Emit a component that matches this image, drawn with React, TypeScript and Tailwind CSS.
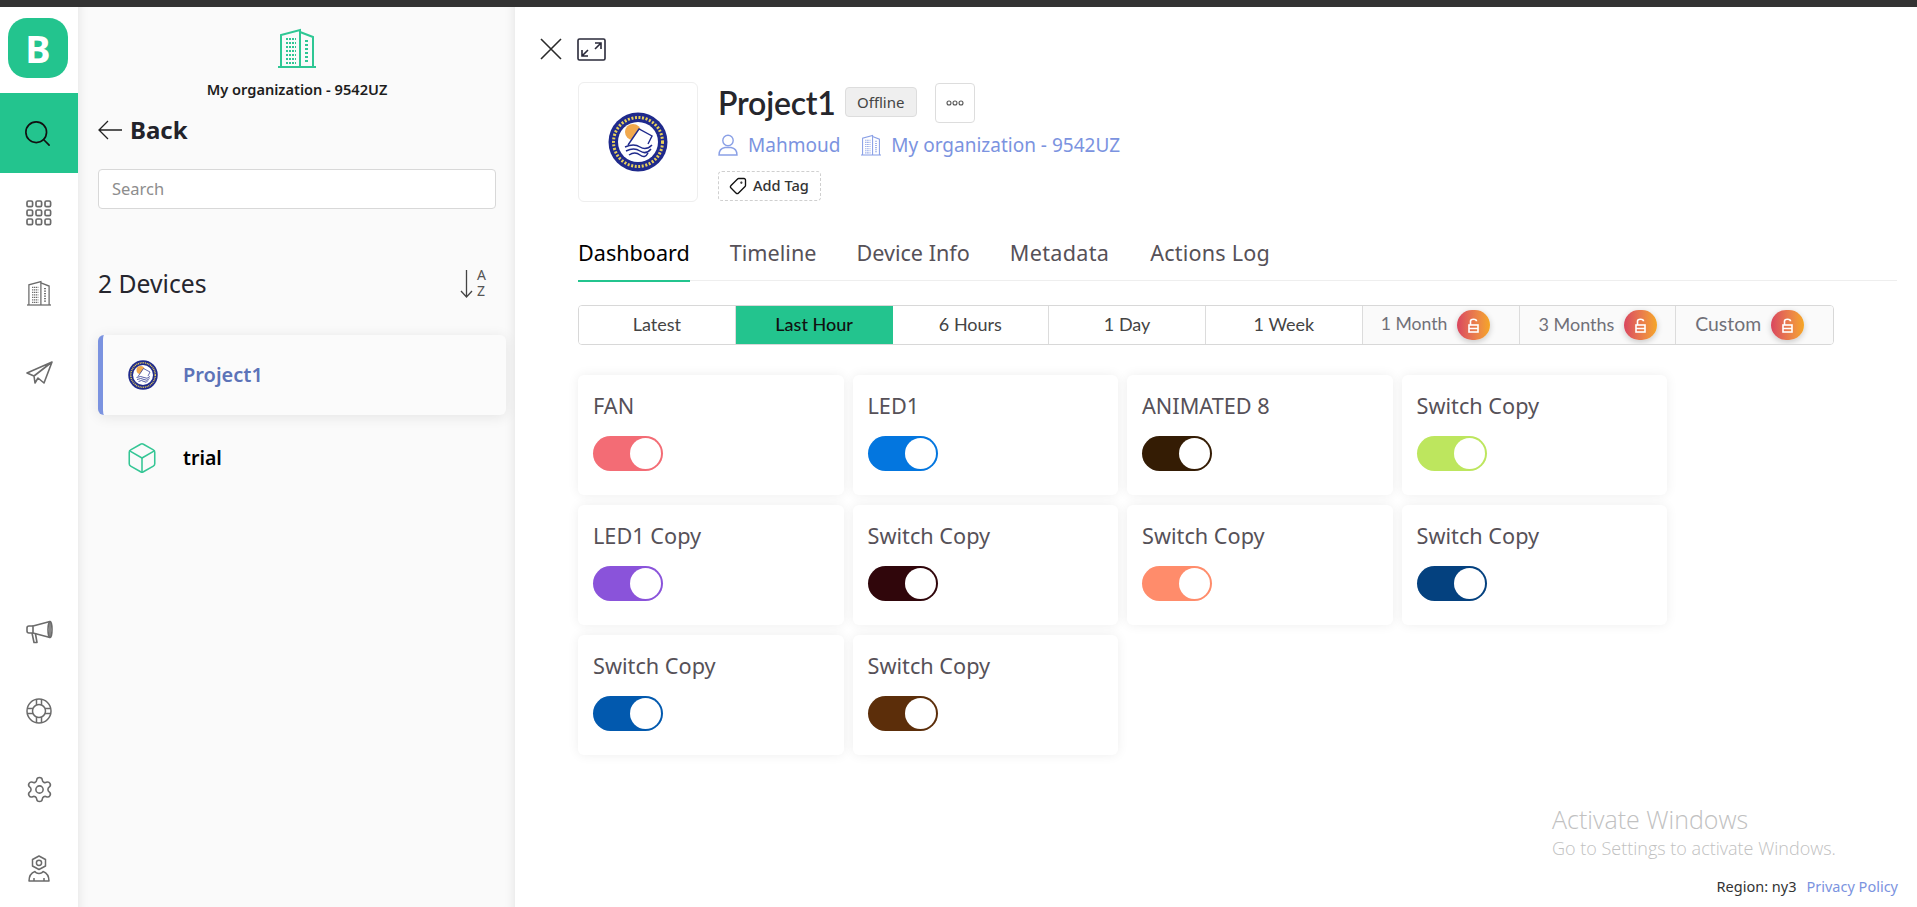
import React from "react";
import { Search, Settings, Tag, Box } from "lucide-react";

const ubuntuLike = { fontFamily: '"Noto Sans", sans-serif' };

function Building({ className, stroke }: { className?: string; stroke: string }) {
  return (
    <svg viewBox="0 0 38 40" className={className} fill="none" stroke={stroke}>
      <path d="M0 39H38" strokeWidth="2" />
      <path d="M3 39V7L22 2V39" strokeWidth="2" />
      <path d="M22 4L35 9V39" strokeWidth="2" />
      {[11, 15, 19, 23, 27, 31, 35].map((y) => (
        <path key={y} d="M8 0H18" transform={`translate(0 ${y})`} strokeWidth="2" strokeDasharray="2 1" />
      ))}
      {[13, 17, 21, 25, 29, 33].map((y) => (
        <path key={y} d="M27 0H30" transform={`translate(0 ${y})`} strokeWidth="2" />
      ))}
    </svg>
  );
}

function Seal({ size }: { size: number }) {
  return (
    <svg width={size} height={size} viewBox="0 0 60 60">
      <circle cx="30" cy="30" r="29.5" fill="#1f2a8c" />
      <circle cx="30" cy="30" r="24.5" fill="none" stroke="#e8cf5a" strokeWidth="3" strokeDasharray="2 1.6" />
      <circle cx="30" cy="30" r="20" fill="#fff" />
      <circle cx="25" cy="20" r="8" fill="#f1a94e" />
      <path d="M20 33L31 17L44 24L40 32" fill="#fff" stroke="#1f2a8c" strokeWidth="1.4" />
      <path d="M17 35Q26 31 32 35T44 33M18 39Q26 35 32 39T43 37M21 43Q27 39 32 43T40 41" fill="none" stroke="#1f2a8c" strokeWidth="1.5" />
    </svg>
  );
}

function Rail() {
  const gray = "#6b6b6b";
  return (
    <aside className="w-[78px] h-full bg-white flex flex-col shrink-0">
      <div className="h-[86px] pl-[8px] pt-[11px]">
        <div className="w-[60px] h-[60px] rounded-[19px] bg-[#23c48e] text-white flex items-center justify-center text-[38px] font-bold" style={ubuntuLike}>B</div>
      </div>
      <div className="h-20 bg-[#23c48e] flex items-center justify-center pr-[3px]">
        <Search size={31} strokeWidth={1.3} color="#111" />
      </div>
      <div className="h-20 flex items-center justify-center">
        <svg width="26" height="26" viewBox="0 0 26 26" fill="none" stroke={gray} strokeWidth="1.7">
          {[1, 10, 19].map((y) => [1, 10, 19].map((x) => <rect key={`${x}${y}`} x={x} y={y} width="5.6" height="5.6" rx="1.4" />))}
        </svg>
      </div>
      <div className="h-20 flex items-center justify-center">
        <Building className="w-[24px] h-[26px]" stroke={gray} />
      </div>
      <div className="h-20 flex items-center justify-center">
        <svg width="27" height="24" viewBox="0 0 27 24" fill="none" stroke={gray} strokeWidth="1.6" strokeLinejoin="round">
          <path d="M26 1L1 12L8 15L26 1L18 22L12 17L9 22L8 15" />
        </svg>
      </div>
      <div className="mt-auto -mb-px">
        <div className="h-[79px] flex items-center justify-center">
          <svg width="27" height="24" viewBox="0 0 27 24" fill="none" stroke={gray} strokeWidth="1.6" strokeLinejoin="round">
            <path d="M7 6H3a2 2 0 0 0-2 2v3a2 2 0 0 0 2 2h4" />
            <path d="M7 6L24 1.5V17.5L7 13Z" />
            <ellipse cx="24" cy="9.5" rx="2" ry="8" />
            <path d="M6 13L8 22.5H11L9.5 14" />
          </svg>
        </div>
        <div className="h-[79px] flex items-center justify-center">
          <svg width="26" height="26" viewBox="0 0 26 26" fill="none" stroke={gray} strokeWidth="1.5">
            <circle cx="13" cy="13" r="12" />
            <circle cx="13" cy="13" r="6.5" />
            <path d="M10.5 1.5V7M15.5 1.5V7M10.5 19V24.5M15.5 19V24.5M1.5 10.5H7M1.5 15.5H7M19 10.5H24.5M19 15.5H24.5" />
          </svg>
        </div>
        <div className="h-[79px] flex items-center justify-center">
          <Settings size={29} strokeWidth={1.3} color={gray} />
        </div>
        <div className="h-[79px] flex items-center justify-center">
          <svg width="22" height="27" viewBox="0 0 22 27" fill="none" stroke={gray} strokeWidth="1.5" strokeLinejoin="round">
            <path d="M11 1L17.5 4.5V11L11 14.5L4.5 11V4.5Z" />
            <circle cx="11" cy="7.8" r="2.6" />
            <path d="M1 26C1 21 3 18 7 16.5C8 19 14 19 15 16.5C19 18 21 21 21 26Z" />
            <path d="M6 26V23M16 26V23" />
          </svg>
        </div>
      </div>
    </aside>
  );
}

function Panel() {
  return (
    <section
      className="w-[437px] h-full shrink-0 bg-[#fafafa] flex flex-col pl-5 pr-[9px] shadow-[inset_12px_0_12px_-12px_rgba(0,0,0,0.1),inset_-12px_0_12px_-12px_rgba(0,0,0,0.1)]"
      style={ubuntuLike}
    >
      <div className="pr-[10px] flex flex-col items-center pt-[21px]">
        <Building className="w-[38px] h-[40px]" stroke="#2ec794" />
        <div className="mt-[11px] text-[14.6px] leading-[20px] font-semibold text-[#1d1d1d]">My organization - 9542UZ</div>
      </div>
      <div className="mt-[15px] flex items-center h-[32px] gap-[8px]">
        <svg width="24" height="20" viewBox="0 0 24 20" fill="none" stroke="#222" strokeWidth="1.3"><path d="M24 10H1M10 1L1 10L10 19" /></svg>
        <span className="text-[24px] font-bold text-[#22232a]">Back</span>
      </div>
      <div className="mt-[23px] mr-[10px] h-[40px] rounded-[4px] border border-[#d8d8d8] bg-white flex items-center px-[13px] pt-[1px] text-[16.5px] text-[#8d8d8d]">Search</div>
      <div className="mt-[55px] mr-[20px] h-[40px] flex items-center justify-between">
        <span className="text-[24.7px] text-[#26262e]">2 Devices</span>
        <span className="flex items-center gap-[4px] text-[#555]">
          <svg width="13" height="28" viewBox="0 0 13 28" fill="none" stroke="#444" strokeWidth="1.3"><path d="M6.5 0V27M1 21L6.5 27L12 21" /></svg>
          <span className="flex flex-col text-[14px] leading-[16px] -mt-[2px]"><span>A</span><span>Z</span></span>
        </span>
      </div>
      <div className="mt-[31px] h-20 rounded-[6px] border-l-[5px] border-[#7b93e0] bg-[#fbfbfb] shadow-[0_2px_14px_rgba(0,0,0,0.09)] flex items-center pl-[25px]">
        <Seal size={30} />
        <span className="ml-[25px] text-[20px] font-semibold text-[#5c73b8]">Project1</span>
      </div>
      <div className="h-[85px] flex items-center pl-[30px] pt-[1px]">
        <Box size={34} strokeWidth={1.1} color="#35c695" className="ml-[-3px]" />
        <span className="ml-[24px] text-[19.5px] font-semibold text-black">trial</span>
      </div>
    </section>
  );
}

const locked = [
  { label: "1 Month", cell: "bg-[#fafafa] text-[#707078] text-[17.6px] border-r border-[#dcdcdc] flex items-center pl-[18px] gap-[10px]" },
  { label: "3 Months", cell: "bg-[#fafafa] text-[#707078] text-[18px] border-r border-[#dcdcdc] flex items-center pl-[19px] gap-[10px]" },
  { label: "Custom", cell: "bg-[#fafafa] text-[#707078] text-[19.4px] flex items-center pl-[19px] gap-[10px]" },
];
const ranges = ["Latest", "Last Hour", "6 Hours", "1 Day", "1 Week"];

function RangeBar() {
  return (
    <div className="mt-[24px] w-[1256px] h-[40px] grid grid-cols-8 rounded-[4px] border border-[#d8d8d8] overflow-hidden" style={{ fontFamily: 'Lato, sans-serif' }}>
      {ranges.map((r, i) => (
        <div key={r} className={i === 1 ? "bg-[#23c48e] text-[#111] text-[18px] flex items-center justify-center font-medium pb-[2px]" : "bg-white text-[#444] text-[18px] border-r border-[#dcdcdc] flex items-center justify-center pb-[2px]"}>{r}</div>
      ))}
      {locked.map((r) => (
        <div key={r.label} className={r.cell}>
          <span className="pb-[2px]">{r.label}</span>
          <span className="w-[33px] h-[30px] rounded-full bg-gradient-to-r from-[#d9455e] to-[#f5a623] flex items-center justify-center shadow-[0_2px_6px_rgba(0,0,0,0.2)]">
            <svg width="11" height="15" viewBox="0 0 11 15" fill="none" stroke="#fff" strokeWidth="1.6">
              <rect x="1" y="7" width="9" height="7" />
              <path d="M2.5 7V3.2C2.5 0.5 8.5 0.5 8.5 3.2" />
              <path d="M1 10.5H10" />
            </svg>
          </span>
        </div>
      ))}
    </div>
  );
}

const widgets = [
  ["FAN", "#f36c75"],
  ["LED1", "#0376df"],
  ["ANIMATED 8", "#341c04"],
  ["Switch Copy", "#bde65e"],
  ["LED1 Copy", "#8a53da"],
  ["Switch Copy", "#30060b"],
  ["Switch Copy", "#ff8c6b"],
  ["Switch Copy", "#04417f"],
  ["Switch Copy", "#0259ae"],
  ["Switch Copy", "#5c2e0a"],
];

function Widget({ title, color }: { title: string; color: string }) {
  return (
    <div className="h-[120px] rounded-[6px] bg-white shadow-[0_0_12px_rgba(0,0,0,0.07)] px-[15px] pt-[15px]">
      <div className="text-[21.7px] leading-[32px] text-[#565158]" style={ubuntuLike}>{title}</div>
      <div className="mt-[14px] w-[70px] h-[35px] rounded-full flex items-center justify-end pr-[2px]" style={{ backgroundColor: color }}>
        <span className="w-[31px] h-[31px] rounded-full bg-white" />
      </div>
    </div>
  );
}

function Main() {
  return (
    <main className="relative flex-1 h-full bg-white" style={ubuntuLike}>
      <div className="flex items-center gap-[15px] pl-[25px] pt-[24px] h-[60px]">
        <svg width="22" height="22" viewBox="0 0 22 22" fill="none" stroke="#2a2a2a" strokeWidth="1.6"><path d="M1 1L21 21M21 1L1 21" /></svg>
        <svg width="29" height="23" viewBox="0 0 29 23" fill="none" stroke="#2a2a3a" strokeWidth="1.6">
          <rect x="1" y="1" width="27" height="21" rx="1.5" />
          <path d="M18 5H24V11M24 5L18 11M5 12V18H11M5 18L11 12" />
        </svg>
      </div>
      <div className="pl-[63px] pr-5">
        <div className="flex mt-[15px] h-[120px]">
          <div className="w-[120px] h-[120px] rounded-[6px] border border-[#eeeeee] flex items-center justify-center">
            <Seal size={60} />
          </div>
          <div className="ml-[20px] flex flex-col">
            <div className="flex items-start h-[40px]">
              <span className="text-[32px] leading-[42px] font-semibold text-[#26262c] tracking-[-0.2px]" style={{ fontFamily: 'Lato, sans-serif' }}>Project1</span>
              <span className="ml-[9px] mt-[5px] w-[72px] h-[30px] rounded-[4px] border border-[#dddddd] bg-[#efefef] text-[15px] text-[#444] flex items-center justify-center">Offline</span>
              <span className="ml-[18px] mt-[1px] w-[40px] h-[40px] rounded-[4px] border border-[#dddddd] bg-white flex items-center justify-center">
                <svg width="18" height="6" viewBox="0 0 18 6" fill="none" stroke="#555" strokeWidth="1.1">
                  <circle cx="3" cy="3" r="2" /><circle cx="9" cy="3" r="2" /><circle cx="15" cy="3" r="2" />
                </svg>
              </span>
            </div>
            <div className="mt-[10px] flex items-center h-[26px] text-[19px] text-[#7b93e0]">
              <svg width="20" height="22" viewBox="0 0 20 22" fill="none" stroke="#8aa0e6" strokeWidth="1.4"><circle cx="10" cy="6.5" r="5.2" /><path d="M1 21C1 16 4 14 7 13.5H13C16 14 19 16 19 21Z" /></svg>
              <span className="ml-[10px]">Mahmoud</span>
              <Building className="ml-[21px] w-[20px] h-[22px]" stroke="#8aa0e6" />
              <span className="ml-[10px]">My organization - 9542UZ</span>
            </div>
            <div className="mt-[13px] w-[103px] h-[30px] rounded-[4px] border border-dashed border-[#cfcfcf] flex items-center pl-[10px] gap-[6px] text-[14.6px] font-medium text-[#333]">
              <Tag size={18} strokeWidth={1.8} color="#111" className="-scale-x-100" />
              Add Tag
            </div>
          </div>
        </div>
        <nav className="mt-[35px] h-[44px] border-b border-[#eeeeee] flex gap-[40px] text-[21.6px] text-[#565158]">
          <span className="relative text-black h-[44px] leading-[32px]">Dashboard<span className="absolute left-0 right-0 -bottom-[1px] h-[2px] bg-[#23c48e]" /></span>
          <span className="leading-[32px]">Timeline</span>
          <span className="leading-[32px]">Device Info</span>
          <span className="leading-[32px] tracking-[0.3px]">Metadata</span>
          <span className="leading-[32px] tracking-[0.2px] ml-[1px]">Actions Log</span>
        </nav>
        <RangeBar />
        <div className="mt-[30px] w-[1089px] grid grid-cols-4 gap-x-[9px] gap-y-[10px]">
          {widgets.map(([t, c], i) => <Widget key={i} title={t} color={c} />)}
        </div>
      </div>
      <div className="absolute left-[1037px] top-[796px] text-[#c1c1c1]" style={{ fontFamily: '"Open Sans", sans-serif' }}>
        <div className="text-[25px] leading-[33px] font-light">Activate Windows</div>
        <div className="text-[18px] leading-[24px] font-light">Go to Settings to activate Windows.</div>
      </div>
      <div className="absolute right-[19px] bottom-[9px] flex gap-[10px] text-[14.5px] leading-[24px]">
        <span className="text-[#333]">Region: ny3</span>
        <span className="text-[#7b93e0]">Privacy Policy</span>
      </div>
    </main>
  );
}

export default function App() {
  return (
    <div className="w-[1917px] h-[907px] overflow-hidden flex flex-col bg-white">
      <div className="h-[7px] bg-[#333333] shrink-0" />
      <div className="flex flex-1 min-h-0">
        <Rail />
        <Panel />
        <Main />
      </div>
    </div>
  );
}
